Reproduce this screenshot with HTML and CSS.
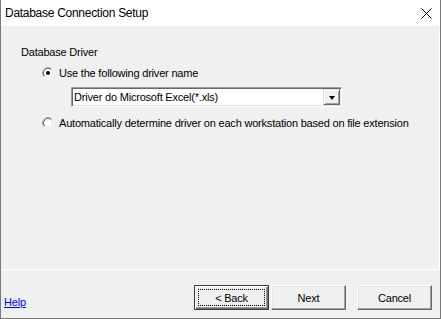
FILE: index.html
```html
<!DOCTYPE html>
<html lang="en">
<head>
    <meta charset="UTF-8">
    <title>Database Connection Setup</title>
    <link rel="stylesheet" href="styles.css">
</head>
<body>
    <div class="window">
        <div class="titlebar">
            <span class="title">Database Connection Setup</span>
            <svg class="close" width="11" height="11" viewBox="0 0 11 11">
                <path d="M0.5 0.5 L10.5 10.5 M10.5 0.5 L0.5 10.5" stroke="#000" stroke-width="1" fill="none"/>
            </svg>
        </div>

        <div class="page">
            <div class="group-label">Database Driver</div>

            <label class="option">
                <svg class="radio" width="12" height="12" viewBox="0 0 12 12">
                    <circle cx="6" cy="6" r="4.5" fill="#fff"/>
                    <path d="M2.11 9.89 A5.5 5.5 0 0 1 9.89 2.11" stroke="#a0a0a0" fill="none"/>
                    <path d="M9.89 2.11 A5.5 5.5 0 0 1 2.11 9.89" stroke="#fff" fill="none"/>
                    <path d="M2.82 9.18 A4.5 4.5 0 0 1 9.18 2.82" stroke="#696969" fill="none"/>
                    <path d="M9.18 2.82 A4.5 4.5 0 0 1 2.82 9.18" stroke="#e3e3e3" fill="none"/>
                    <circle cx="6" cy="6" r="2" fill="#000"/>
                </svg>
                <span>Use the following driver name</span>
            </label>

            <div class="select">
                <span class="select-value">Driver do Microsoft Excel(*.xls)</span>
                <span class="select-btn"><span class="arrow"></span></span>
            </div>

            <label class="option option-auto">
                <svg class="radio" width="12" height="12" viewBox="0 0 12 12">
                    <circle cx="6" cy="6" r="4.5" fill="#fff"/>
                    <path d="M2.11 9.89 A5.5 5.5 0 0 1 9.89 2.11" stroke="#a0a0a0" fill="none"/>
                    <path d="M9.89 2.11 A5.5 5.5 0 0 1 2.11 9.89" stroke="#fff" fill="none"/>
                    <path d="M2.82 9.18 A4.5 4.5 0 0 1 9.18 2.82" stroke="#696969" fill="none"/>
                    <path d="M9.18 2.82 A4.5 4.5 0 0 1 2.82 9.18" stroke="#e3e3e3" fill="none"/>
                </svg>
                <span>Automatically determine driver on each workstation based on file extension</span>
            </label>
        </div>

        <div class="footer">
            <a class="help" href="#">Help</a>
            <div class="buttons">
                <button class="btn btn-default">&lt; Back</button>
                <button class="btn btn-next">Next</button>
                <button class="btn">Cancel</button>
            </div>
        </div>
    </div>
</body>
</html>
```

FILE: styles.css
```css
* {
    margin: 0;
    padding: 0;
    box-sizing: border-box;
}

body {
    font-family: 'Liberation Sans', Arial, sans-serif;
    font-size: 11px;
    letter-spacing: -0.2px;
    color: #000;
    background: #f0f0f0;
}

.window {
    width: 441px;
    height: 319px;
    border: 1px solid #7a7a7a;
    border-top: none;
    background: #f0f0f0;
    display: flex;
    flex-direction: column;
}

.titlebar {
    height: 26px;
    background: #fff;
    display: flex;
    align-items: center;
    justify-content: space-between;
    padding: 0 8px 0 4px;
    font-size: 12px;
    letter-spacing: -0.28px;
}

.close {
    display: block;
}

.page {
    height: 244px;
    border-right: 1px solid #fff;
    border-bottom: 1px solid #fff;
    padding: 19px 0 0 20px;
}

.group-label {
    line-height: 14px;
}

.option {
    display: flex;
    align-items: center;
    gap: 5px;
    height: 14px;
    line-height: 14px;
    margin: 7px 0 0 21px;
}

.option-auto {
    margin-top: 9px;
}

.radio {
    display: block;
    flex-shrink: 0;
}

.select {
    width: 271px;
    height: 20px;
    margin: 7px 0 0 50px;
    background: #fff;
    border: 1px solid;
    border-color: #a0a0a0 #fff #fff #a0a0a0;
    box-shadow: inset 1px 1px #696969, inset -1px -1px #e3e3e3;
    display: flex;
    align-items: center;
    padding-left: 2px;
}

.select-value {
    flex: 1;
}

.select-btn {
    width: 17px;
    height: 16px;
    margin-right: 1px;
    background: #f0f0f0;
    border: 1px solid;
    border-color: #e3e3e3 #696969 #696969 #e3e3e3;
    box-shadow: inset 1px 1px #fff, inset -1px -1px #a0a0a0;
    display: flex;
    align-items: center;
    justify-content: center;
}

.arrow {
    width: 1px;
    height: 0;
    border-top: 4px solid #000;
    border-left: 3px solid transparent;
    border-right: 3px solid transparent;
    margin-top: 1px;
}

.footer {
    flex: 1;
    display: flex;
    align-items: flex-start;
    padding: 15px 8px 0 3px;
}

.help {
    color: #0000ff;
    text-decoration: underline;
    line-height: 14px;
    margin-top: 10px;
}

.buttons {
    margin-left: auto;
    display: flex;
}

.btn {
    width: 75px;
    height: 25px;
    font-family: inherit;
    font-size: 11px;
    letter-spacing: inherit;
    color: #000;
    background: #f0f0f0;
    border: 1px solid;
    border-color: #fff #696969 #696969 #fff;
    box-shadow: inset -1px -1px #a0a0a0, inset 1px 1px #e3e3e3;
}

.btn-default {
    position: relative;
    border-color: #3c3c3c;
    box-shadow: inset 1px 1px #fff, inset -1px -1px #696969, inset -2px -2px #a0a0a0;
    margin-right: 2px;
}

.btn-default::after {
    content: "";
    position: absolute;
    inset: 3px;
    border: 1px dotted #000;
}

.btn-next {
    margin-right: 11px;
}
```
